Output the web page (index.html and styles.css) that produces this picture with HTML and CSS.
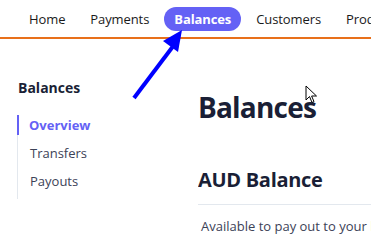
FILE: index.html
```
<!DOCTYPE html>
<html>
<head>
	<meta charset="UTF-8">
	<title>Balances</title>
	<link rel="stylesheet" href="styles.css">
</head>
<body>
	<div class="topnav">
		<a class="nav_item">Home</a>
		<a class="nav_item">Payments</a>
		<a class="nav_item active">Balances</a>
		<a class="nav_item">Customers</a>
		<a class="nav_item">Products</a>
	</div>
	<div class="page">
		<div class="sidebar">
			<h3>Balances</h3>
			<ul class="side_menu">
				<li class="current">Overview</li>
				<li>Transfers</li>
				<li>Payouts</li>
			</ul>
		</div>
		<div class="content">
			<h1>Balances</h1>
			<h2>AUD Balance</h2>
			<p class="note">Available to pay out to your bank account</p>
		</div>
	</div>
	<!-- annotation arrow -->
	<svg class="arrow" width="70" height="80" viewBox="0 0 70 80">
		<line x1="6" y1="70" x2="46" y2="17" stroke="#0000ff" stroke-width="4" />
		<polygon points="54,2 35,13 50,24" fill="#0000ff" />
	</svg>
	<!-- mouse pointer -->
	<svg class="pointer" width="14" height="19" viewBox="0 0 14 19">
		<path d="M1 1 L1 15 L4.5 11.5 L7 17.5 L9 16.6 L6.6 11 L11.5 11 Z" fill="#fff" stroke="#000" stroke-width="1" stroke-linejoin="round" />
	</svg>
</body>
</html>
```
FILE: styles.css
```
*{
	margin: 0;
	padding: 0;
	box-sizing: border-box;
}
body{
	font-family: "Open Sans", "Noto Sans", sans-serif;
	color: #1a1f36;
	background: #fff;
	overflow: hidden;
}
.topnav{
	display: flex;
	gap: 5px;
	padding: 7px 0 6px 19px;
	border-bottom: 2px solid #e8701a;
	white-space: nowrap;
	overflow: hidden;
}
.nav_item{
	display: block;
	height: 24px;
	line-height: 24px;
	padding: 0 10px;
	font-size: 13px;
	letter-spacing: -0.1px;
	color: #1a1a1a;
	border-radius: 12px;
}
.nav_item.active{
	background: #6461f5;
	color: #fff;
	font-weight: 700;
	padding: 0 10px;
}
.page{
	display: flex;
	padding-left: 17px;
}
.sidebar{
	width: 181px;
	flex-shrink: 0;
	padding-top: 39px;
}
.sidebar h3{
	font-size: 14px;
	font-weight: 700;
	line-height: 20px;
	padding-left: 1px;
}
.side_menu{
	list-style: none;
	margin-top: 17px;
	border-left: 1px solid #e3e8ee;
	padding-bottom: 4px;
}
.side_menu li{
	font-size: 13px;
	line-height: 28px;
	padding-left: 11px;
	color: #3c4257;
	margin-left: -1px;
	border-left: 2px solid transparent;
}
.side_menu li.current{
	color: #6461f5;
	font-weight: 700;
	border-left-color: #6461f5;
	line-height: 20px;
	margin: 0 0 4px -1px;
	padding-left: 10px;
}
.content{
	flex: 1;
	padding-top: 49px;
	white-space: nowrap;
	overflow: hidden;
}
.content h1{
	font-size: 28px;
	font-weight: 700;
	line-height: 38px;
	letter-spacing: -0.8px;
}
.content h2{
	font-size: 20px;
	font-weight: 700;
	line-height: 28px;
	margin-top: 40px;
	padding-bottom: 10px;
	border-bottom: 1px solid #e3e8ee;
	letter-spacing: -0.3px;
}
.note{
	font-size: 13px;
	color: #3c4257;
	padding: 12px 0 0 3px;
}
.arrow{
	position: absolute;
	left: 128px;
	top: 28px;
}
.pointer{
	position: absolute;
	left: 305px;
	top: 85px;
}
```
